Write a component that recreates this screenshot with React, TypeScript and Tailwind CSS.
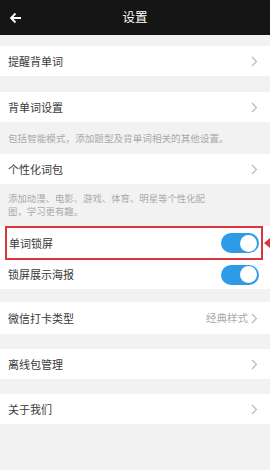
import React from "react";

const Chevron = () => (
  <svg width="7" height="11" viewBox="0 0 7 11" fill="none">
    <path d="M1 1l4.5 4.5L1 10" stroke="#b5b5b5" strokeWidth="1.1" />
  </svg>
);

const Toggle = () => (
  <div className="w-[38px] h-[20px] rounded-full bg-[#2e9be6] flex items-center justify-end pr-[2px]">
    <div className="w-[17px] h-[17px] rounded-full bg-white" />
  </div>
);

const Row = ({ label, value }: { label: string; value?: string }) => (
  <div className="h-[30px] bg-white flex items-center justify-between pl-[8px] pr-[12px]">
    <span className="text-[11px] text-[#3a3a3a]">{label}</span>
    <div className="flex items-center gap-[3px]">
      {value && <span className="text-[10.5px] text-[#aaa]">{value}</span>}
      <Chevron />
    </div>
  </div>
);

const App = () => {
  return (
    <div
      className="w-[270px] h-[470px] bg-[#f2f2f2] overflow-hidden"
      style={{ fontFamily: '"Noto Sans CJK SC", "Noto Sans", sans-serif' }}
    >
      <div className="h-[35px] bg-[#151515] flex items-center relative">
        <svg className="ml-[9px]" width="13" height="12" viewBox="0 0 13 12" fill="none">
          <path d="M12 6H2M6.5 1.5L2 6l4.5 4.5" stroke="#fff" strokeWidth="1.8" />
        </svg>
        <span className="absolute left-0 right-0 text-center text-[12.5px] text-white">设置</span>
      </div>

      <div className="h-[11px]" />
      <Row label="提醒背单词" />
      <div className="h-[16px]" />
      <Row label="背单词设置" />
      <div className="h-[32px] flex items-center pl-[8px] text-[9.6px] text-[#aaa]">
        包括智能模式，添加题型及背单词相关的其他设置。
      </div>
      <Row label="个性化词包" />
      <div className="h-[42px] pl-[8px] pt-[8px] text-[9.4px] leading-[13px] text-[#aaa]">
        添加动漫、电影、游戏、体育、明星等个性化配
        <br />
        图，学习更有趣。
      </div>

      <div className="bg-white">
        <div className="relative">
          <div className="ml-[5px] mr-[7px] h-[34px] border-2 border-[#d9363e] flex items-center justify-between pl-[2px] pr-[2px]">
            <span className="text-[11px] text-[#3a3a3a]">单词锁屏</span>
            <Toggle />
          </div>
          <div className="absolute right-0 top-[12px] w-0 h-0 border-y-[5px] border-y-transparent border-r-[6px] border-r-[#d9363e]" />
        </div>
        <div className="h-[29px] flex items-center justify-between pl-[8px] pr-[11px]">
          <span className="text-[11px] text-[#3a3a3a]">锁屏展示海报</span>
          <Toggle />
        </div>
      </div>

      <div className="h-[13px]" />
      <div className="h-[32px] bg-white flex items-center justify-between pl-[8px] pr-[12px]">
        <span className="text-[11px] text-[#3a3a3a]">微信打卡类型</span>
        <div className="flex items-center gap-[3px]">
          <span className="text-[10.5px] text-[#aaa]">经典样式</span>
          <Chevron />
        </div>
      </div>
      <div className="h-[15px]" />
      <Row label="离线包管理" />
      <div className="h-[15px]" />
      <Row label="关于我们" />
    </div>
  );
};

export default App;
